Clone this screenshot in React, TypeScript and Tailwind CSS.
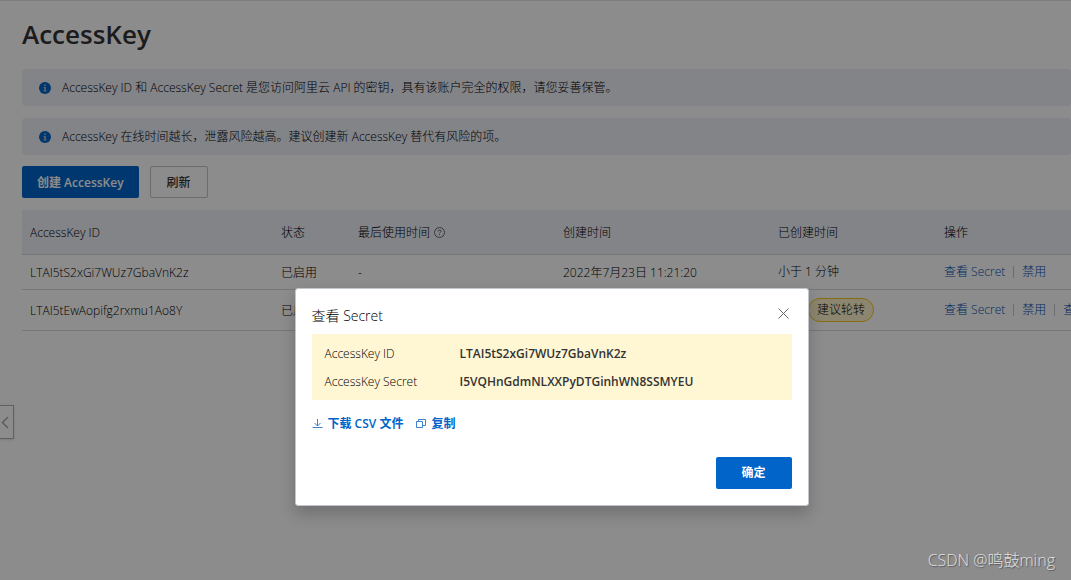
import React from 'react';

interface AccessKey {
    id: string;
    status: string;
    lastUsed: string;
    createdAt: string;
    age: string;
    badge?: string;
    actions: string[];
}

const keys: AccessKey[] = [
    {
        id: 'LTAI5tS2xGi7WUz7GbaVnK2z',
        status: '已启用',
        lastUsed: '-',
        createdAt: '2022年7月23日 11:21:20',
        age: '小于 1 分钟',
        actions: ['查看 Secret', '禁用'],
    },
    {
        id: 'LTAI5tEwAopifg2rxmu1Ao8Y',
        status: '已启用',
        lastUsed: '',
        createdAt: '',
        age: '',
        badge: '建议轮转',
        actions: ['查看 Secret', '禁用', '查看'],
    },
];

const notices = [
    'AccessKey ID 和 AccessKey Secret 是您访问阿里云 API 的密钥，具有该账户完全的权限，请您妥善保管。',
    'AccessKey 在线时间越长，泄露风险越高。建议创建新 AccessKey 替代有风险的项。',
];

const InfoIcon = () => (
    <svg width="12" height="12" viewBox="0 0 12 12" className="shrink-0">
        <circle cx="6" cy="6" r="6" fill="#0064c8" />
        <path d="M5.2 2.4h1.6v1.5H5.2zM4.6 5h2.2v3.6h.7v.9H4.5v-.9h.8V5.9h-.7z" fill="#bbb" />
    </svg>
);

const HelpIcon = () => (
    <svg width="11" height="11" viewBox="0 0 11 11" fill="none" stroke="#666" strokeWidth="1">
        <circle cx="5.5" cy="5.5" r="5" />
        <path d="M4 4.4c0-.9.6-1.4 1.5-1.4S7 3.5 7 4.3c0 1-1.5 1-1.5 2.1M5.5 7.3v1" />
    </svg>
);

const Notice: React.FC<{ text: string }> = ({ text }) => (
    <div className="flex h-[37px] items-center gap-[11px] rounded-sm bg-[#eff0f8] px-[17px]">
        <InfoIcon />
        <p>{text}</p>
    </div>
);

const KeyTable = () => (
    <table className="w-[1140px] table-fixed border-collapse text-left">
        <thead className="bg-[#eff0f8]">
            <tr className="h-11 border-b border-[#d7d8d9]">
                <th className="w-[251px] px-2 pt-0.5 font-light">AccessKey ID</th>
                <th className="w-[77px] px-2 pt-0.5 font-light">状态</th>
                <th className="w-[205px] px-2 pt-0.5 font-light">
                    <span className="flex items-center gap-1">
                        最后使用时间
                        <HelpIcon />
                    </span>
                </th>
                <th className="w-[215px] px-2 pt-0.5 font-light">创建时间</th>
                <th className="w-[166px] px-2 pt-0.5 font-light">已创建时间</th>
                <th className="px-2 pt-0.5 font-light">操作</th>
            </tr>
        </thead>
        <tbody>
            {keys.map((key) => (
                <tr key={key.id} className="h-[35px] border-b border-[#d7d8d9] last:h-[41px]">
                    <td className="px-2 pt-0.5">{key.id}</td>
                    <td className="px-2 pt-0.5">{key.status}</td>
                    <td className="px-2 pt-0.5">{key.lastUsed}</td>
                    <td className="px-2 pt-0.5">{key.createdAt}</td>
                    <td className="px-2">
                        {key.age}
                        {key.badge && (
                            <span className="ml-[30px] inline-block h-6 rounded-full border border-[#f5c518] bg-[#fff5cc] px-2 leading-[22px]">
                                {key.badge}
                            </span>
                        )}
                    </td>
                    <td className="px-2">
                        <div className="flex items-center whitespace-nowrap">
                            {key.actions.map((action, i) => (
                                <React.Fragment key={action}>
                                    {i > 0 && <span className="mx-2 h-3 w-px bg-[#c6c6c6]" />}
                                    <a href="#" className="text-[#0050b4]">{action}</a>
                                </React.Fragment>
                            ))}
                        </div>
                    </td>
                </tr>
            ))}
        </tbody>
    </table>
);

const SecretDialog = () => (
    <div
        role="dialog"
        aria-label="查看 Secret"
        className="w-[514px] rounded-[3px] border border-[#c0c6cc] bg-white p-4 shadow-[0_8px_16px_rgba(0,0,0,0.2)]"
    >
        <div className="flex items-start justify-between">
            <h2 className="text-sm leading-[22px]">查看 Secret</h2>
            <button type="button" aria-label="关闭" className="mt-[3px] mr-[3px]">
                <svg width="11" height="11" viewBox="0 0 11 11" stroke="#666" strokeWidth="1">
                    <path d="M.5.5l10 10M10.5.5l-10 10" />
                </svg>
            </button>
        </div>
        <dl className="mt-[7px] grid grid-cols-[135px_1fr] gap-y-2 bg-[#fff6d3] px-[13px] pt-[10px] pb-2 leading-5">
            <dt>AccessKey ID</dt>
            <dd className="font-semibold text-[#333]">LTAI5tS2xGi7WUz7GbaVnK2z</dd>
            <dt>AccessKey Secret</dt>
            <dd className="font-semibold text-[#333]">I5VQHnGdmNLXXPyDTGinhWN8SSMYEU</dd>
        </dl>
        <div className="mt-[14px] flex gap-3 font-semibold leading-5 text-[#0064c8]">
            <button type="button" className="flex items-center gap-[5px]">
                <svg width="11" height="11" viewBox="0 0 11 11" fill="none" stroke="#3f83cf">
                    <path d="M5.5 0v7M2.5 4l3 3 3-3M.5 8.5h10" />
                </svg>
                下载 CSV 文件
            </button>
            <button type="button" className="flex items-center gap-[5px]">
                <svg width="11" height="11" viewBox="0 0 11 11" fill="none" stroke="#3f83cf">
                    <path d="M1.5 2.5h6v6h-6zM3.5 2.5v-2h7v6h-3" />
                </svg>
                复制
            </button>
        </div>
        <div className="mt-[23px] flex justify-end">
            <button type="button" className="h-8 w-[76px] rounded-[2px] bg-[#0064c8] font-semibold text-white">
                确定
            </button>
        </div>
    </div>
);

export default function App() {
    return (
        <div className="relative min-h-screen overflow-hidden bg-white font-['Open_Sans','Noto_Sans_CJK_SC',sans-serif] text-xs font-light text-black">
            <main className="border-t border-[#e5e5e5] pt-[11px] pl-[22px]">
                <h1 className="mb-[13px] text-[26px] leading-[44px] font-semibold text-[#333]">AccessKey</h1>
                <div className="mb-[11px] flex flex-col gap-3">
                    {notices.map((text) => (
                        <Notice key={text} text={text} />
                    ))}
                </div>
                <div className="mb-3 flex gap-[11px]">
                    <button type="button" className="h-8 rounded-[2px] bg-[#0064c8] px-[15px] pt-0.5 font-semibold text-white">
                        创建 AccessKey
                    </button>
                    <button type="button" className="h-8 rounded-[2px] border border-[#c0c6cc] px-4 pt-0.5 font-medium text-[#333]">
                        刷新
                    </button>
                </div>
                <KeyTable />
            </main>

            <button
                type="button"
                aria-label="收起"
                className="absolute top-[405px] left-0 flex h-[34px] w-[14px] items-center border border-l-0 border-[#b0b0b0] shadow"
            >
                <svg width="9" height="13" viewBox="0 0 9 13" fill="none" stroke="#aaa" strokeWidth="1.5">
                    <path d="M8 1L2.5 6.5 8 12" />
                </svg>
            </button>

            <div className="absolute inset-0 flex items-start justify-center bg-black/45 pt-72 pl-8">
                <SecretDialog />
            </div>

            <p className="absolute right-4 bottom-2 text-base leading-6 text-[#e0e0e0] [text-shadow:1px_1px_1px_#555]">
                CSDN @鸣鼓ming
            </p>
        </div>
    );
}
